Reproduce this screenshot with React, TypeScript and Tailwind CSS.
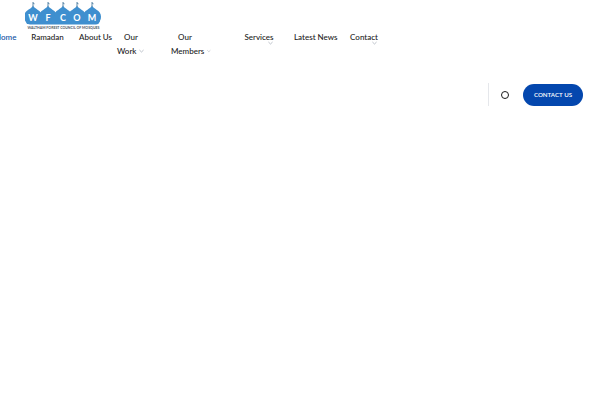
export default function App() {
  const chev = (
    <svg width="5" height="4" viewBox="0 0 6 4" fill="none" stroke="#9ca3af" strokeWidth="0.8"><path d="M0.5 0.8 L3 3.2 L5.5 0.8" /></svg>
  );
  const centers = [8, 23, 38, 52, 67];
  const letters = ["W", "F", "C", "O", "M"];
  return (
    <div className="w-[600px] h-[400px] bg-white overflow-hidden font-['Lato','Liberation_Sans',sans-serif] font-medium text-[8px] text-[#1a1a1a]">
      <div className="ml-[25px] h-[30px] w-[76px]">
        <svg width="76" height="30" viewBox="0 0 76 30">
          <g fill="#3f8fcf">
            {centers.map((c) => (
              <path key={c} d={`M${c} 5.5 C${c + 1} 9 ${c + 9} 10 ${c + 9} 16.5 C${c + 9} 20 ${c + 7} 22 ${c + 6} 24 L${c - 6} 24 C${c - 7} 22 ${c - 9} 20 ${c - 9} 16.5 C${c - 9} 10 ${c - 1} 9 ${c} 5.5 Z`} />
            ))}
            <path d="M0.5 17 L75.5 17 C75.5 21 74 24.5 71 24.5 L5 24.5 C2 24.5 0.5 21 0.5 17 Z" />
          </g>
          <g stroke="#4a7a9e" strokeWidth="0.9" fill="none">
            {centers.map((c) => (
              <path key={c} d={`M${c} 2 L${c} 7 M${c} 3 L${c + 1.5} 3.8`} />
            ))}
          </g>
          <g fill="#ffffff" fontFamily="'Lato',sans-serif" fontSize="9" fontWeight="700" textAnchor="middle">
            {centers.map((c, i) => (
              <text key={c} x={c} y="21">{letters[i]}</text>
            ))}
          </g>
          <text x="38.5" y="28.6" fontFamily="'Lato',sans-serif" fontSize="3.5" fontWeight="700" fill="#4b5563" textAnchor="middle">WALTHAM FOREST COUNCIL OF MOSQUES</text>
        </svg>
      </div>
      <nav className="flex items-start ml-[-5px] leading-[14px]">
        <a className="w-[20px] text-right text-[#0b4ea2]">Home</a>
        <a className="ml-[16px] w-[33px] text-center">Ramadan</a>
        <a className="ml-[15px] w-[31px] text-center whitespace-nowrap">About Us</a>
        <div className="ml-[7px] w-[30px]">
          <div className="text-center ml-[-2px]">Our</div>
          <div className="flex items-center gap-[3px]">Work {chev}</div>
        </div>
        <div className="ml-[24px] w-[40px]">
          <div className="text-center ml-[-12px]">Our</div>
          <div className="flex items-center gap-[3px]">Members {chev}</div>
        </div>
        <div className="ml-[34px] w-[28px] flex flex-col items-center">
          <span>Services</span>
          <span className="self-end mt-[-3px]">{chev}</span>
        </div>
        <a className="ml-[21px] w-[42px] text-center whitespace-nowrap">Latest News</a>
        <div className="ml-[15px] w-[26px] flex flex-col items-center">
          <span>Contact</span>
          <span className="self-end mt-[-3px]">{chev}</span>
        </div>
      </nav>
      <div className="flex justify-end items-center mt-[25px] pr-[17px]">
        <div className="h-[23px] w-px bg-[#e5e7eb]" />
        <div className="ml-[12px] w-[8px] h-[8px] rounded-full border border-[#1a1a1a]" />
        <a className="ml-[14px] w-[60px] h-[22px] rounded-full bg-[#0447ae] text-white text-[6.2px] font-semibold flex items-center justify-center">CONTACT US</a>
      </div>
    </div>
  );
}
